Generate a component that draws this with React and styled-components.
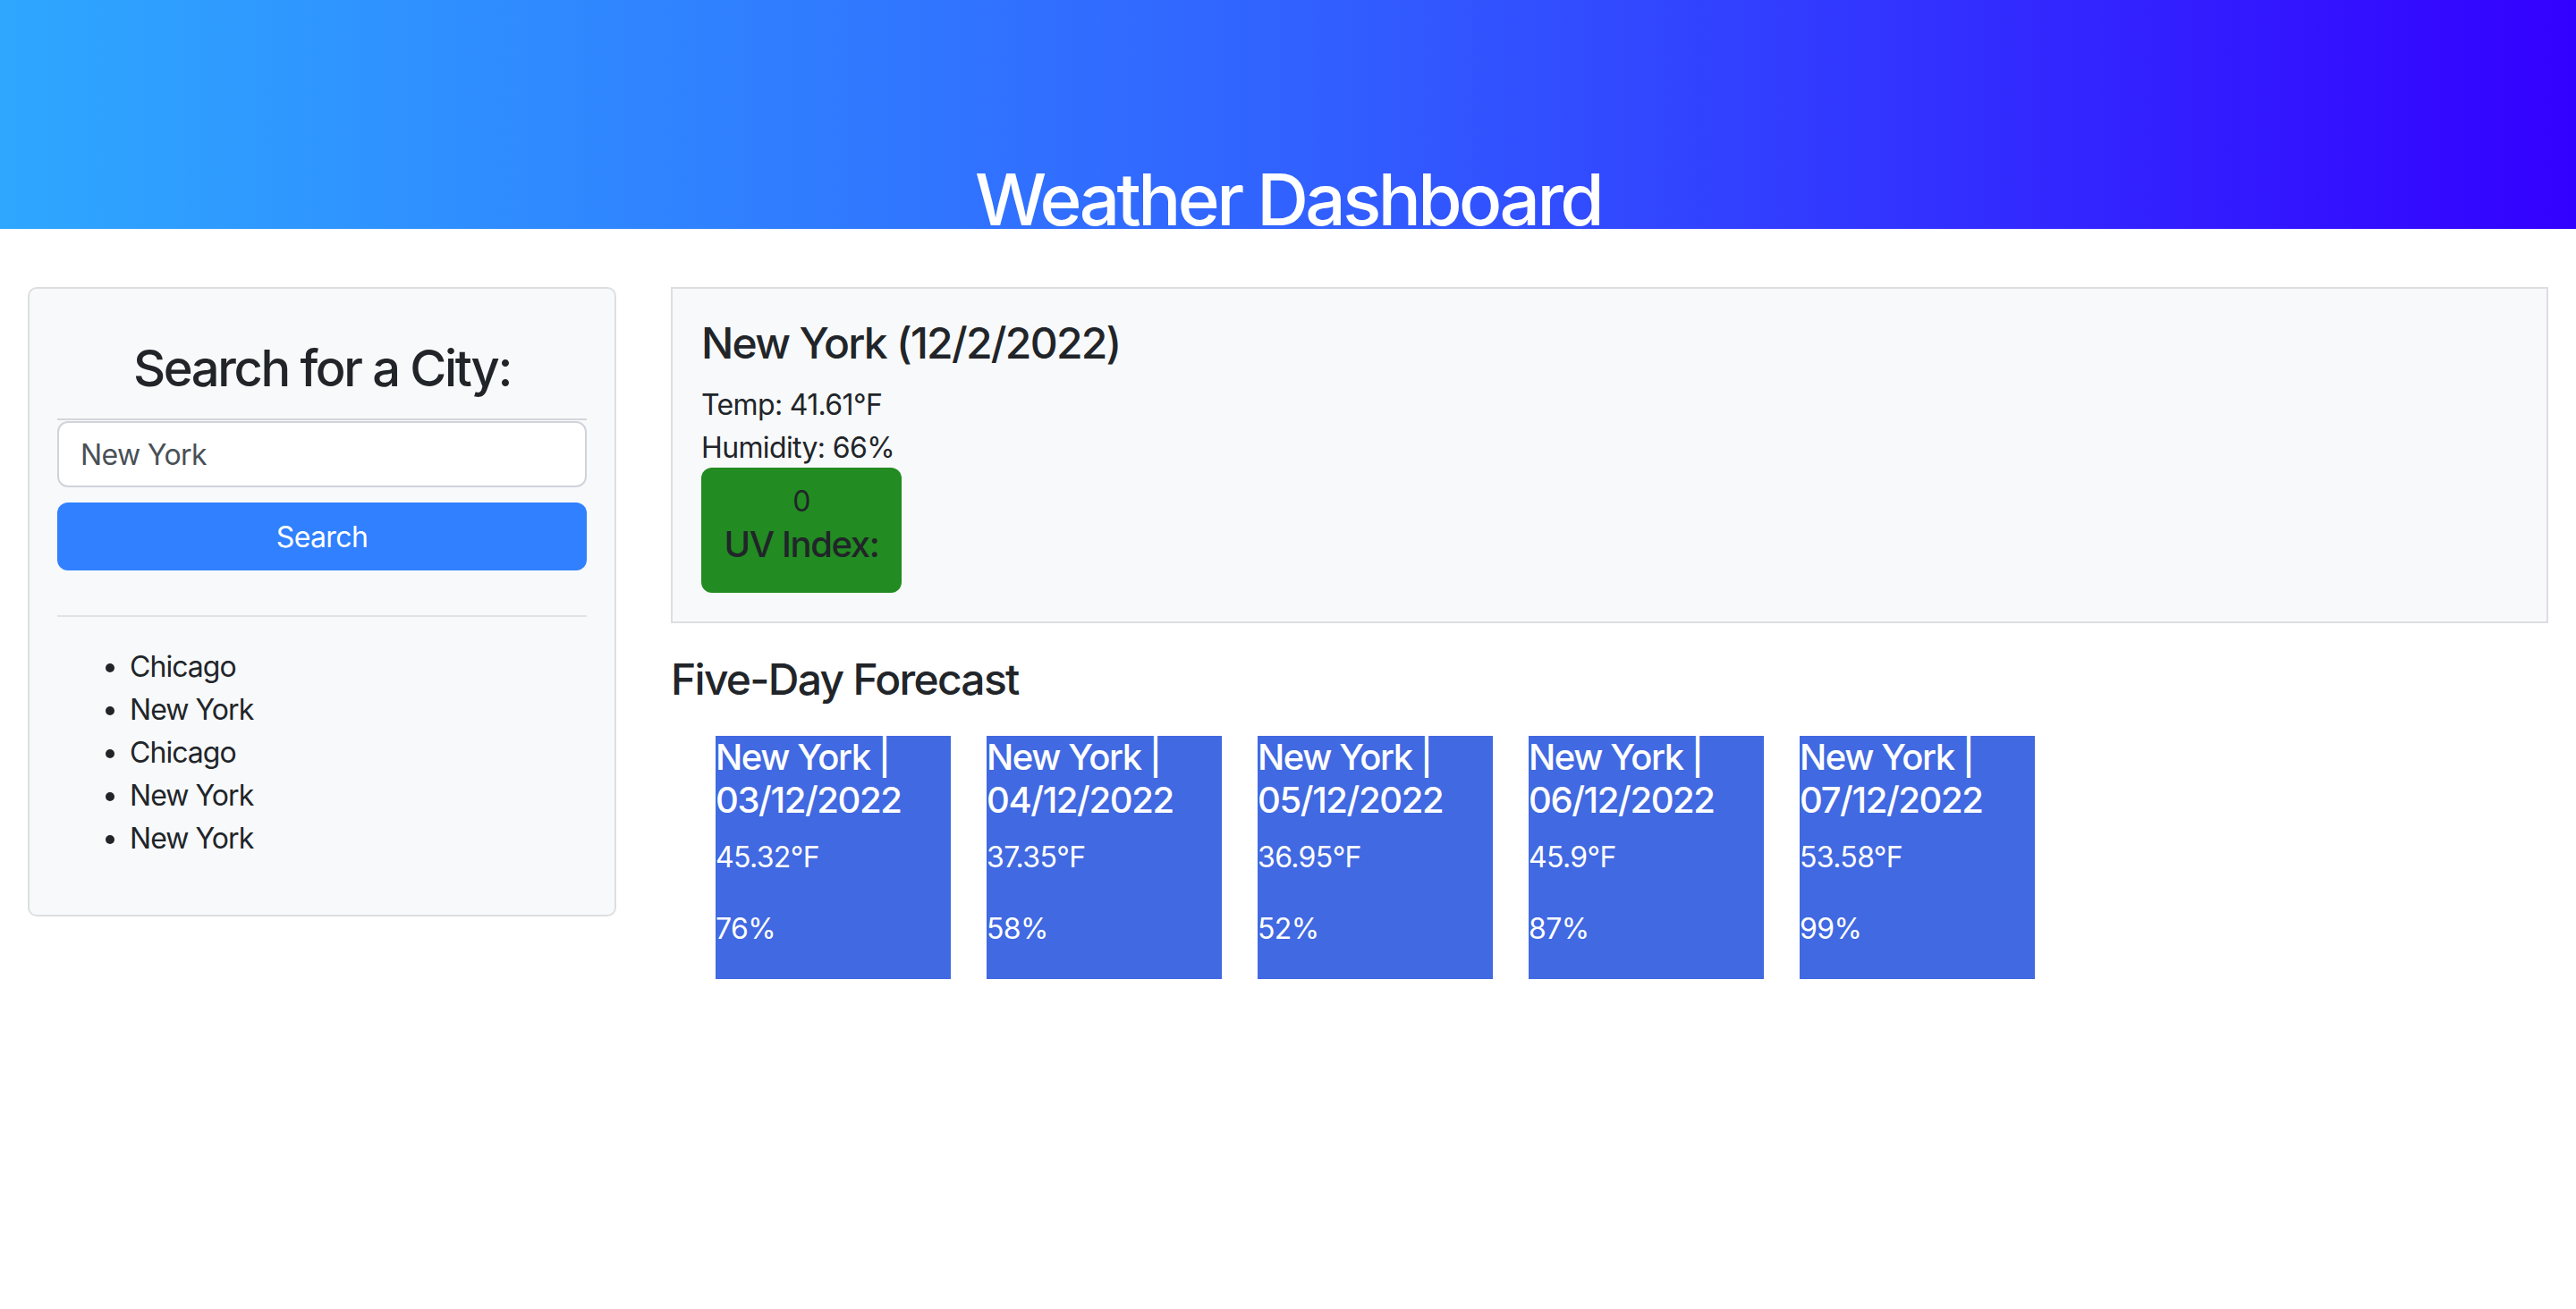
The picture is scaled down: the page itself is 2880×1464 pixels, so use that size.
import React from 'react'
import styled, { createGlobalStyle } from 'styled-components'

const GlobalStyle = createGlobalStyle`
  * {
    box-sizing: border-box;
  }
  body {
    margin: 0;
    background: #fff;
    color: #212529;
    font-family: Inter, "Noto Sans", "Liberation Sans", sans-serif;
    font-size: 32px;
    line-height: 1.5;
    letter-spacing: -0.02em;
  }
`

const Header = styled.header`
  height: 256px;
  background: linear-gradient(to right, #2ea7ff 0%, #3162ff 50%, #3300ff 100%);
  display: flex;
  align-items: flex-end;
  justify-content: center;
  overflow: hidden;
`

const Title = styled.h1`
  margin: 0 0 -15px;
  color: #fff;
  font-size: 80px;
  font-weight: 500;
  line-height: 1.2;
  letter-spacing: -0.045em;
`

const Main = styled.main`
  display: grid;
  grid-template-columns: 658px 1fr;
  column-gap: 61px;
  align-items: start;
  padding: 65px 31px 0;
`

const SearchPanel = styled.aside`
  background: #f8f9fa;
  border: 2px solid #dcdfe2;
  border-radius: 10px;
  padding: 32px 31px 29px;
`

const SearchTitle = styled.h3`
  margin: 24px 0 22px;
  font-size: 56px;
  font-weight: 500;
  line-height: 1.2;
  letter-spacing: -0.042em;
  text-align: center;
`

const Rule = styled.hr`
  margin: ${(p) => p.$top || 0}px 0 ${(p) => p.$bottom || 0}px;
  border: 0;
  border-top: 2px solid ${(p) => p.$color || '#dee2e6'};
`

const CityInput = styled.input`
  display: block;
  width: 100%;
  height: 74px;
  margin-top: 1px;
  padding: 0 24px;
  background: #fff;
  border: 2px solid #ced4da;
  border-radius: 12px;
  color: #495057;
  font-family: inherit;
  font-size: 32px;
  letter-spacing: -0.02em;
  outline: none;
`

const SearchButton = styled.button`
  display: block;
  width: 100%;
  height: 76px;
  margin-top: 17px;
  background: #3080ff;
  border: 0;
  border-radius: 12px;
  color: #fff;
  font-family: inherit;
  font-size: 32px;
  letter-spacing: -0.02em;
  cursor: pointer;
`

const History = styled.ul`
  margin: 32px 0;
  padding-left: 81px;
  line-height: 48px;
  letter-spacing: -0.03em;
`

const Content = styled.section`
  min-width: 0;
`

const Today = styled.div`
  background: #f8f9fa;
  border: 2px solid #dcdee1;
  padding: 32px 32px 32px;
`

const Heading = styled.h4`
  margin: ${(p) => p.$top || 0}px 0 16px;
  font-size: 48px;
  font-weight: 500;
  line-height: 1.2;
  letter-spacing: -0.036em;
`

const Stat = styled.p`
  margin: 0;
  line-height: 48px;
`

const UvBadge = styled.div`
  width: 224px;
  margin-top: -2px;
  padding: 14px 0;
  background: #228b22;
  border-radius: 12px;
  text-align: center;
  line-height: 48px;
`

const UvLabel = styled.h5`
  margin: 0 0 16px;
  font-size: 40px;
  font-weight: 500;
  line-height: 48px;
  letter-spacing: -0.035em;
`

const Forecast = styled.div`
  display: flex;
  gap: 40px;
  padding-left: 50px;
  margin-top: 35px;
`

const DayCard = styled.div`
  width: 263px;
  background: #4169e1;
  color: #fff;
`

const DayTitle = styled.h5`
  margin: 0 0 16px;
  font-size: 40px;
  font-weight: 500;
  line-height: 48px;
  letter-spacing: -0.035em;
`

const DayStat = styled.p`
  margin: 0 0 32px;
  line-height: 48px;
`

const history = ['Chicago', 'New York', 'Chicago', 'New York', 'New York']

const days = [
  { date: '03/12/2022', temp: '45.32°F', humidity: '76%' },
  { date: '04/12/2022', temp: '37.35°F', humidity: '58%' },
  { date: '05/12/2022', temp: '36.95°F', humidity: '52%' },
  { date: '06/12/2022', temp: '45.9°F', humidity: '87%' },
  { date: '07/12/2022', temp: '53.58°F', humidity: '99%' },
]

export default function App() {
  return (
    <>
      <GlobalStyle />
      <Header>
        <Title>Weather Dashboard</Title>
      </Header>
      <Main>
        <SearchPanel>
          <SearchTitle>Search for a City:</SearchTitle>
          <Rule $color="#d3d6da" />
          <CityInput defaultValue="New York" />
          <SearchButton>Search</SearchButton>
          <Rule $top={50} $color="#e0e2e5" />
          <History>
            {history.map((city, i) => (
              <li key={i}>{city}</li>
            ))}
          </History>
        </SearchPanel>
        <Content>
          <Today>
            <Heading>New York (12/2/2022)</Heading>
            <Stat>Temp: 41.61°F</Stat>
            <Stat>Humidity: 66%</Stat>
            <UvBadge>
              <div>0</div>
              <UvLabel>UV Index:</UvLabel>
            </UvBadge>
          </Today>
          <Heading $top={34}>Five-Day Forecast</Heading>
          <Forecast>
            {days.map((d) => (
              <DayCard key={d.date}>
                <DayTitle>New York | {d.date}</DayTitle>
                <DayStat>{d.temp}</DayStat>
                <DayStat>{d.humidity}</DayStat>
              </DayCard>
            ))}
          </Forecast>
        </Content>
      </Main>
    </>
  )
}
